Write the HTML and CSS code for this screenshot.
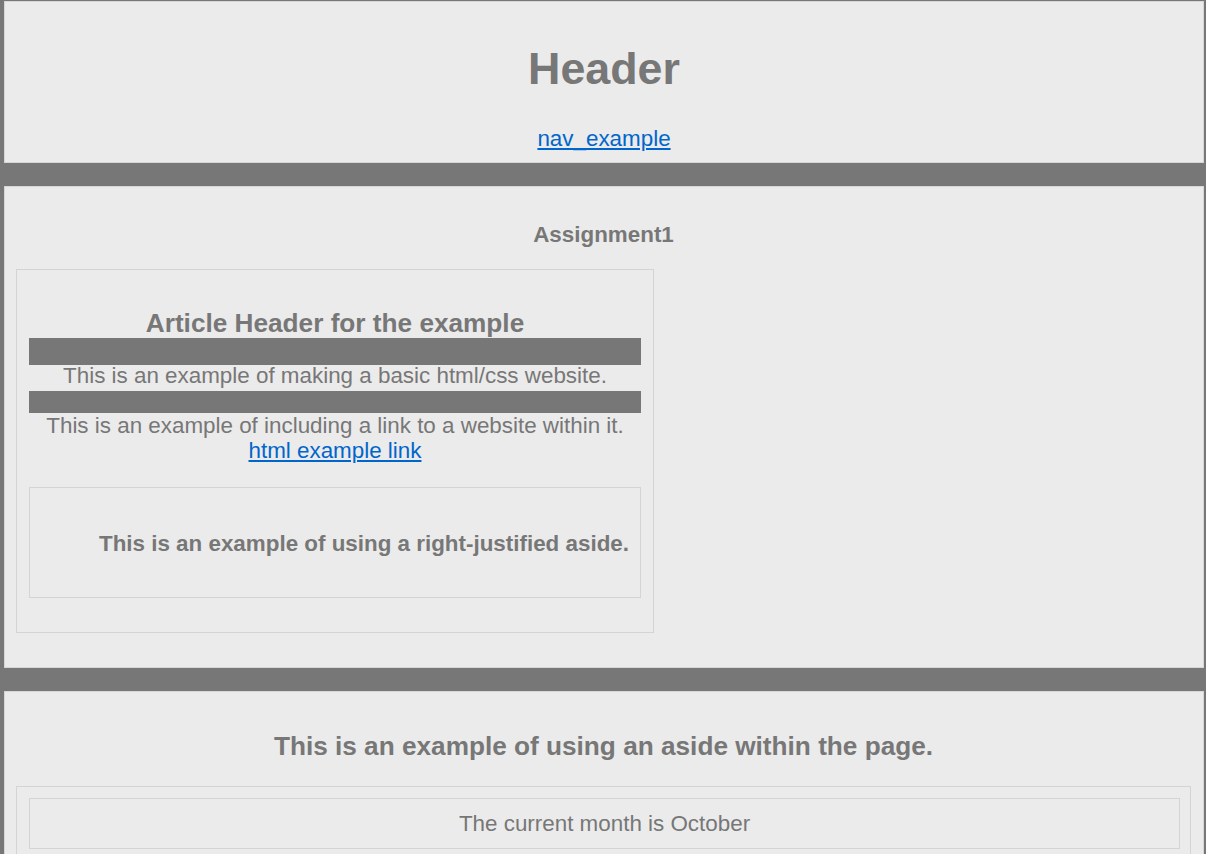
FILE: index.html
```html
<!DOCTYPE html>
<html lang="en">
<head>
<meta charset="utf-8">
<title>Assignment1</title>
<link rel="stylesheet" href="styles.css">
</head>
<body>
<header class="panel top">
  <h1 class="site-title">Header</h1>
  <nav class="nav"><a href="#">nav_example</a></nav>
</header>

<main class="panel main">
  <h4 class="page-title">Assignment1</h4>
  <article class="article">
    <h3 class="article-title">Article Header for the example</h3>
    <div class="bar bar-tall"></div>
    <p class="text text-tight">This is an example of making a basic html/css website.</p>
    <div class="bar bar-short"></div>
    <p class="text">This is an example of including a link to a website within it.<br><a href="#">html example link</a></p>
    <aside class="side-right">
      <h4 class="side-text">This is an example of using a right-justified aside.</h4>
    </aside>
  </article>
</main>

<section class="panel lower">
  <h3 class="lower-title">This is an example of using an aside within the page.</h3>
  <div class="outer-box">
    <div class="inner-box">The current month is October</div>
  </div>
</section>
</body>
</html>
```

FILE: styles.css
```css
html {
  background: #777777;
}
body {
  margin: 0;
  padding: 1px 2px 0 4px;
  background: #777777;
  color: #777777;
  font-family: "Liberation Sans", Arial, sans-serif;
  font-size: 22.4px;
}
a {
  color: #0066cc;
  text-decoration: underline;
}
.panel {
  display: block;
  background: #ebebeb;
  border: 1px solid #d6d6d6;
  margin: 0 0 23px 0;
}
.top {
  padding: 41px 0 11px;
  text-align: center;
}
.site-title {
  margin: 0;
  font-size: 44.8px;
  line-height: 50px;
  font-weight: bold;
}
.nav {
  margin-top: 33px;
  line-height: 25px;
}
.main {
  padding: 35px 12px 34px 11px;
}
.page-title {
  margin: 0 0 22px;
  font-size: 22.4px;
  line-height: 25px;
  text-align: center;
}
.article {
  width: 612px;
  border: 1px solid #d4d4d4;
  padding: 39px 12px 34px 12px;
  text-align: center;
}
.article-title {
  margin: 0;
  font-size: 26.2px;
  line-height: 29px;
}
.bar {
  background: #777777;
}
.bar-tall {
  height: 27px;
}
.bar-short {
  height: 22px;
}
.text {
  margin: 0;
  line-height: 25px;
}
.text-tight {
  line-height: 22px;
  margin-bottom: 4px;
}
.side-right {
  display: block;
  margin-top: 24px;
  border: 1px solid #d4d4d4;
  padding: 43px 11px 41px;
  text-align: right;
}
.side-text {
  margin: 0;
  font-size: 22.4px;
  line-height: 25px;
}
.lower {
  padding: 40px 12px 40px 11px;
}
.lower-title {
  margin: 0 0 25px;
  font-size: 26.2px;
  line-height: 29px;
  text-align: center;
}
.outer-box {
  border: 1px solid #d4d4d4;
  padding: 11px 10px 11px 12px;
}
.inner-box {
  border: 1px solid #d4d4d4;
  padding: 12px;
  line-height: 25px;
  text-align: center;
}
```
